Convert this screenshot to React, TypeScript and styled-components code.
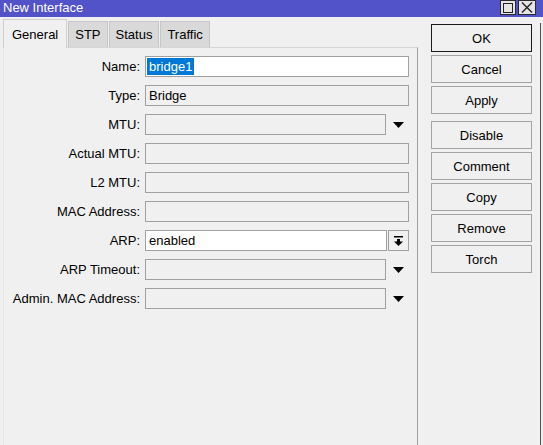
import React from "react";
import styled, { createGlobalStyle } from "styled-components";

const GlobalStyle = createGlobalStyle`
  html, body {
    margin: 0;
    padding: 0;
    background: #f0f0f0;
  }
  body {
    font-family: "Liberation Sans", Arial, sans-serif;
    font-size: 13px;
    color: #000;
  }
  * { box-sizing: border-box; }
`;

const Window = styled.div`
  width: 543px;
  height: 445px;
  display: flex;
  flex-direction: column;
  overflow: hidden;
  background: #f0f0f0;
`;

const TitleBar = styled.div`
  height: 17px;
  flex: none;
  background: #5252c9;
  color: #fff;
  display: flex;
  align-items: flex-start;
  justify-content: space-between;
  padding-left: 3px;
  font-size: 13px;
  line-height: 16px;
`;

const TitleButtons = styled.div`
  display: flex;
  gap: 2px;
  margin-right: 7px;
`;

const TitleBtn = styled.div<{ $w: number }>`
  width: ${(p) => p.$w}px;
  height: 15px;
  background: #e4e4e4;
  border: 1px solid #2a2a2a;
  display: flex;
  align-items: center;
  justify-content: center;
`;

const Main = styled.div`
  flex: 1;
  display: flex;
  min-height: 0;
`;

const LeftPane = styled.div`
  width: 415px;
  margin-left: 3px;
  display: flex;
  flex-direction: column;
`;

const TabRow = styled.div`
  height: 29px;
  margin-top: 2px;
  margin-bottom: -1px;
  display: flex;
  align-items: flex-end;
  gap: 1px;
  position: relative;
  z-index: 1;
`;

const Tab = styled.div<{ $active?: boolean }>`
  height: ${(p) => (p.$active ? 29 : 26)}px;
  padding: ${(p) => (p.$active ? "0 8px" : "0 6px")};
  margin-bottom: ${(p) => (p.$active ? 0 : 1)}px;
  background: ${(p) => (p.$active ? "#f0f0f0" : "#d9d9d9")};
  border: 1px solid ${(p) => (p.$active ? "#d0d0d0" : "#c6c6c6")};
  border-bottom: none;
  display: flex;
  align-items: center;
  font-size: 13px;
  line-height: 15px;
`;

const Panel = styled.div`
  flex: 1;
  border-top: 1px solid #d6d6d6;
  border-left: 1px solid #e6e6e6;
  border-right: 1px solid #a0a0a0;
  padding-top: 8px;
`;

const Form = styled.div`
  display: grid;
  grid-template-columns: 136px 264px;
  column-gap: 5px;
  row-gap: 8px;
  grid-auto-rows: 21px;
`;

const Label = styled.div`
  text-align: right;
  line-height: 21px;
  white-space: nowrap;
`;

const FieldCell = styled.div`
  display: flex;
  height: 21px;
`;

const Input = styled.div<{ $white?: boolean }>`
  flex: 1;
  height: 21px;
  border: 1px solid #a0a0a0;
  background: ${(p) => (p.$white ? "#ffffff" : "#f0f0f0")};
  padding: 0 3px;
  line-height: 19px;
  white-space: nowrap;
  overflow: hidden;
`;

const Selected = styled.span`
  display: inline-block;
  background: #0078d7;
  color: #fff;
  line-height: 17px;
  margin-left: -2px;
  padding: 0 2px 0 2px;
  vertical-align: top;
  margin-top: 1px;
`;

const ArrowSlot = styled.div`
  width: 22px;
  margin-left: 1px;
  display: flex;
  align-items: center;
  justify-content: center;
`;

const DropButton = styled.div`
  width: 21px;
  height: 21px;
  margin-left: 1px;
  border: 1px solid #a0a0a0;
  background: #f0f0f0;
  display: flex;
  align-items: center;
  justify-content: center;
`;

const RightPane = styled.div`
  width: 101px;
  margin-left: 13px;
  padding-top: 7px;
  display: flex;
  flex-direction: column;
  gap: 3px;
`;

const Button = styled.div<{ $default?: boolean; $sep?: boolean }>`
  height: 28px;
  margin-top: ${(p) => (p.$sep ? 4 : 0)}px;
  border: 1px solid ${(p) => (p.$default ? "#1a1a1a" : "#a3a3a3")};
  background: #f0f0f0;
  display: flex;
  align-items: center;
  justify-content: center;
  font-size: 13px;
`;

const EdgeLine = styled.div`
  width: 1px;
  margin-left: 8px;
  margin-top: 6px;
  background: #505050;
`;

const DownTriangle = () => (
  <svg width="11" height="6" viewBox="0 0 11 6">
    <polygon points="0,0 11,0 5.5,6" fill="#000" />
  </svg>
);

const BarArrow = () => (
  <svg width="9" height="10" viewBox="0 0 9 10">
    <rect x="0" y="0" width="9" height="1.5" fill="#000" />
    <rect x="3" y="3" width="3" height="3" fill="#000" />
    <polygon points="0,5.5 9,5.5 4.5,10" fill="#000" />
  </svg>
);

type Row = {
  label: string;
  value?: string;
  white?: boolean;
  selected?: boolean;
  trailing?: "arrow" | "button";
};

const rows: Row[] = [
  { label: "Name:", value: "bridge1", white: true, selected: true },
  { label: "Type:", value: "Bridge" },
  { label: "MTU:", trailing: "arrow" },
  { label: "Actual MTU:" },
  { label: "L2 MTU:" },
  { label: "MAC Address:" },
  { label: "ARP:", value: "enabled", white: true, trailing: "button" },
  { label: "ARP Timeout:", trailing: "arrow" },
  { label: "Admin. MAC Address:", trailing: "arrow" },
];

const buttons: { text: string; def?: boolean; sep?: boolean }[] = [
  { text: "OK", def: true },
  { text: "Cancel" },
  { text: "Apply" },
  { text: "Disable", sep: true },
  { text: "Comment" },
  { text: "Copy" },
  { text: "Remove" },
  { text: "Torch" },
];

export default function App() {
  return (
    <>
      <GlobalStyle />
      <Window>
        <TitleBar>
          <span>New Interface</span>
          <TitleButtons>
            <TitleBtn $w={16}>
              <svg width="10" height="10" viewBox="0 0 10 10">
                <rect x="0.5" y="0.5" width="9" height="9" fill="none" stroke="#222" strokeWidth="1" />
              </svg>
            </TitleBtn>
            <TitleBtn $w={18}>
              <svg width="12" height="11" viewBox="0 0 12 11">
                <path d="M1 0.5 L11 10.5 M11 0.5 L1 10.5" stroke="#222" strokeWidth="1.4" />
              </svg>
            </TitleBtn>
          </TitleButtons>
        </TitleBar>
        <Main>
          <LeftPane>
            <TabRow>
              <Tab $active>General</Tab>
              <Tab>STP</Tab>
              <Tab>Status</Tab>
              <Tab>Traffic</Tab>
            </TabRow>
            <Panel>
              <Form>
                {rows.map((r) => (
                  <React.Fragment key={r.label}>
                    <Label>{r.label}</Label>
                    <FieldCell>
                      <Input $white={r.white}>
                        {r.selected ? <Selected>{r.value}</Selected> : r.value}
                      </Input>
                      {r.trailing === "arrow" && (
                        <ArrowSlot>
                          <DownTriangle />
                        </ArrowSlot>
                      )}
                      {r.trailing === "button" && (
                        <DropButton>
                          <BarArrow />
                        </DropButton>
                      )}
                    </FieldCell>
                  </React.Fragment>
                ))}
              </Form>
            </Panel>
          </LeftPane>
          <RightPane>
            {buttons.map((b) => (
              <Button key={b.text} $default={b.def} $sep={b.sep}>
                {b.text}
              </Button>
            ))}
          </RightPane>
          <EdgeLine />
        </Main>
      </Window>
    </>
  );
}
